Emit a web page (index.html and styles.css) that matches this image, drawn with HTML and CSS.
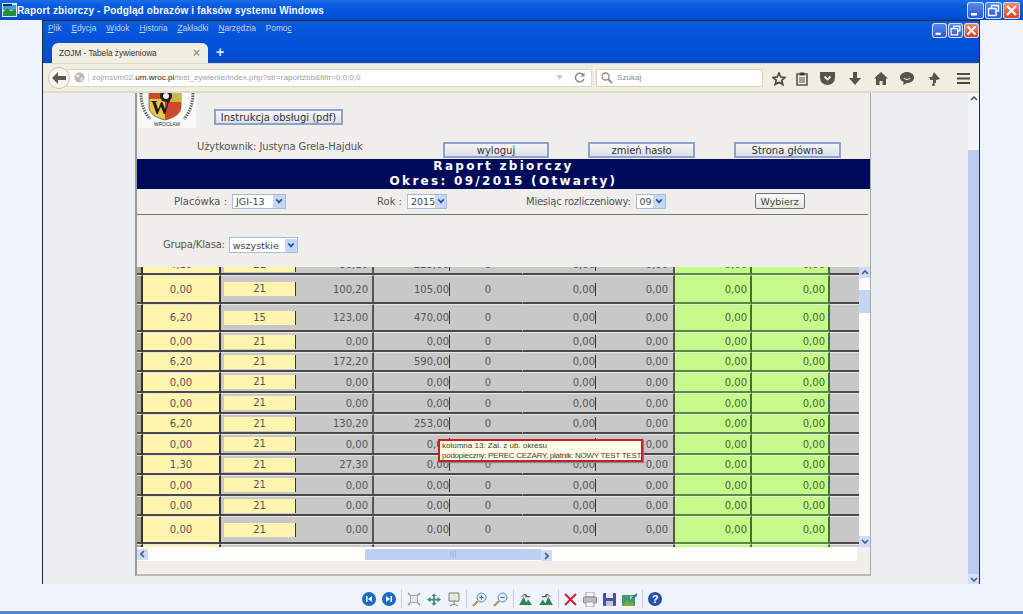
FILE: index.html
```html
<!DOCTYPE html>
<html lang="pl">
<head>
  <meta charset="UTF-8">
  <title>Raport zbiorczy - Podgląd obrazów i faksów systemu Windows</title>
  <link rel="stylesheet" href="styles.css">
</head>
<body>
  <!-- okno podgladu -->
  <div class="xp-title">
    <svg class="app-ico" width="15" height="14" viewBox="0 0 15 14"><rect width="15" height="14" fill="#d8e8f0"/><rect x="1" y="2" width="13" height="5" fill="#3aa0d8"/><path d="M1 9l4-4 4 3 5-2v7H1z" fill="#2c8a3c"/><rect x="1" y="1" width="9" height="2" fill="#10325a"/></svg>
    <span class="xp-title-txt">Raport zbiorczy - Podgląd obrazów i faksów systemu Windows</span>
    <div class="win-btns">
      <span class="wb"><svg width="17" height="17" viewBox="0 0 17 17"><rect x="4" y="11" width="6" height="2.5" fill="#fff"/></svg></span>
      <span class="wb"><svg width="17" height="17" viewBox="0 0 17 17"><path d="M6.5 6V3.5h7V9H11M3.5 6.5h7.5v7H3.5z" fill="none" stroke="#fff" stroke-width="1.4"/></svg></span>
      <span class="wb wb-x"><svg width="17" height="17" viewBox="0 0 17 17"><path d="M4 4l9 9M13 4l-9 9" stroke="#fff" stroke-width="2.2"/></svg></span>
    </div>
  </div>

  <div class="viewer">
    <div class="ff">
      <div class="ff-head">
        <div class="ff-menu">
          <span><u>P</u>lik</span><span><u>E</u>dycja</span><span><u>W</u>idok</span><span><u>H</u>istoria</span><span><u>Z</u>akładki</span><span><u>N</u>arzędzia</span><span>Pomo<u>c</u></span>
          <div class="win-btns small">
            <span class="wb"><svg width="15" height="15" viewBox="0 0 17 17"><rect x="4" y="11" width="6" height="2.5" fill="#fff"/></svg></span>
            <span class="wb"><svg width="15" height="15" viewBox="0 0 17 17"><path d="M6.5 6V3.5h7V9H11M3.5 6.5h7.5v7H3.5z" fill="none" stroke="#fff" stroke-width="1.4"/></svg></span>
            <span class="wb wb-x"><svg width="15" height="15" viewBox="0 0 17 17"><path d="M4 4l9 9M13 4l-9 9" stroke="#fff" stroke-width="2.2"/></svg></span>
          </div>
        </div>
        <div class="ff-tabs">
          <div class="tab"><span>ZOJM - Tabela żywieniowa</span><b>×</b></div>
          <span class="tab-plus">+</span>
        </div>
      </div>

      <div class="ff-bar">
        <span class="back"><svg width="14" height="12" viewBox="0 0 14 12"><path d="M6 0L0 6l6 6V8h8V4H6z" fill="#5a5a52"/></svg></span>
        <div class="url">
          <svg class="globe" width="11" height="11" viewBox="0 0 12 12"><circle cx="6" cy="6" r="5.5" fill="#b8b8b8"/><path d="M2 3h4v3H3zM7 6h3l-1 4H7z" fill="#e4e4e4"/></svg>
          <span class="url-txt">zojmsvm02.<b>um.wroc.pl</b>/test_zywienie/index.php?str=raportzbb&amp;filtr=0;0;0;0</span>
          <svg class="url-drop" width="7" height="5" viewBox="0 0 9 6"><path d="M0 0h9L4.5 6z" fill="#c4c4bc"/></svg>
          <svg class="url-reload" width="11" height="11" viewBox="0 0 11 11"><path d="M9.5 3.5A4.3 4.3 0 1 0 9.8 7" fill="none" stroke="#8a8a84" stroke-width="1.5"/><path d="M10.5 0.5v4h-4z" fill="#8a8a84"/></svg>
        </div>
        <div class="search">
          <svg width="12" height="12" viewBox="0 0 12 12"><circle cx="4.5" cy="4.5" r="3.5" fill="none" stroke="#8a8a8a" stroke-width="1.3"/><path d="M7 7l4 4" stroke="#8a8a8a" stroke-width="1.8"/></svg>
          <span>Szukaj</span>
        </div>
        <div class="ff-ico">
          <svg class="i-star" width="14" height="14" viewBox="0 0 14 14"><path d="M7 1l1.8 4 4.2.4-3.200 2.800 1 4.300L7 10.200 3.200 12.500l1-4.300L1 5.400 5.200 5z" fill="none" stroke="#4a4a44" stroke-width="1.700"/></svg>
          <svg class="i-list" width="12" height="14" viewBox="0 0 12 14"><path d="M1 2h10v11H1z" fill="none" stroke="#55554e" stroke-width="1.600"/><path d="M4 1h4v2H4zM3 6h6M3 8h6M3 10h6" stroke="#55554e" stroke-width="1.200"/></svg>
          <svg class="i-pocket" width="15" height="13" viewBox="0 0 15 13"><path d="M0 0h15v6a7.500 7 0 0 1-15 0z" fill="#55554e"/><path d="M4.500 4.500l3 3 3-3" fill="none" stroke="#f0eee0" stroke-width="1.800"/></svg>
          <svg class="i-down" width="12" height="13" viewBox="0 0 12 13"><path d="M4 0h4v6h4l-6 7-6-7h4z" fill="#55554e"/></svg>
          <svg class="i-home" width="14" height="13" viewBox="0 0 14 13"><path d="M7 0l7 6.500h-2V13H8.500V9h-3v4H2V6.500H0z" fill="#55554e"/></svg>
          <svg class="i-chat" width="14" height="13" viewBox="0 0 14 13"><path d="M7 0c4 0 7 2.300 7 5.500S11 11 7 11L3 13l.7-3C1.500 9 0 7.500 0 5.500 0 2.300 3 0 7 0z" fill="#55554e"/><path d="M4 6c1.500 2 4.500 2 6 0" fill="none" stroke="#f0eee0" stroke-width="1.200"/></svg>
          <svg class="i-puzzle" width="12" height="14" viewBox="0 0 12 14"><path d="M6 0l6 7-4 1v3H5V8H2V6H0l2-1h2z" fill="#55554e"/><circle cx="5.500" cy="12.500" r="1.500" fill="#55554e"/></svg>
          <svg class="i-menu" width="13" height="11" viewBox="0 0 13 11"><path d="M0 1h13M0 5.500h13M0 10h13" stroke="#4a4a44" stroke-width="2"/></svg>
        </div>
      </div>

      <div class="ff-content">
        <div class="gutter">
          <div class="page">
            <div class="top-row">
              <svg class="logo" width="58" height="35" viewBox="0 0 58 35">
                <rect width="58" height="35" fill="#f8f8f6"/>
                <path d="M11 0h32v14c0 7-8 11-16 13-8-2-16-6-16-13z" fill="#e8c64a" stroke="#333" stroke-width=".6"/>
                <path d="M27 9h16v5c0 7-8 11-16 13z" fill="#d0482c"/>
                <path d="M27 0h16v9H27z" fill="#c8b84a"/>
                <path d="M11 0h13v6H11z" fill="#cf4a2c"/>
                <circle cx="28" cy="3" r="6" fill="#222"/><circle cx="28" cy="3" r="3" fill="#eee"/>
                <text x="13" y="21" class="logo-w">W</text>
                <text x="29" y="33" class="logo-txt" text-anchor="middle">WROCŁAW</text>
                <path d="M3 0c0 10 3 19 9 26M55 0c0 10-3 19-9 26" fill="none" stroke="#666" stroke-width="3" stroke-dasharray="1.500 1"/>
              </svg>
              <button class="btn btn-pdf">Instrukcja obsługi (pdf)</button>
            </div>
            <div class="user-row">
              <span class="user">Użytkownik: Justyna Grela-Hajduk</span>
              <button class="btn btn-a">wyloguj</button>
              <button class="btn btn-b">zmień hasło</button>
              <button class="btn btn-b">Strona główna</button>
            </div>
            <div class="band">Raport zbiorczy<br>Okres: 09/2015 (Otwarty)</div>
            <div class="filters">
              <label class="f1">Placówka :</label><span class="sel sel1">JGI-13<i></i></span>
              <label class="f2">Rok :</label><span class="sel sel2">2015<i></i></span>
              <label class="f3">Miesiąc rozliczeniowy:</label><span class="sel sel3">09<i></i></span>
              <button class="btn-wyb">Wybierz</button>
            </div>
            <div class="group">
              <label>Grupa/Klasa:</label><span class="sel sel4">wszystkie<i></i></span>
            </div>

            <div class="tbl-box">
              <div class="tbl-main">
                <div class="tbl-view">
                  <table class="tbl">
                    <colgroup><col class="c0"><col class="c1"><col class="c2"><col class="c3"><col class="c4"><col class="c5"><col class="c6"><col class="c7"><col class="c8"><col class="c9"><col class="c10"></colgroup>
                    <tr class="h20"><td class="cut"></td><td class="z">4,10</td><td class="n"><span>21</span></td><td class="v">86,10</td><td class="a bar">225,00</td><td class="m">0</td><td class="a bar l">0,00</td><td class="v">0,00</td><td class="g">0,00</td><td class="g">0,00</td><td class="x"></td></tr>
                    <tr class="h29"><td class="cut"></td><td class="z">0,00</td><td class="n"><span>21</span></td><td class="v">100,20</td><td class="a bar">105,00</td><td class="m">0</td><td class="a bar l">0,00</td><td class="v">0,00</td><td class="g">0,00</td><td class="g">0,00</td><td class="x"></td></tr>
                    <tr class="h28"><td class="cut"></td><td class="z">6,20</td><td class="n"><span>15</span></td><td class="v">123,00</td><td class="a bar">470,00</td><td class="m">0</td><td class="a bar l">0,00</td><td class="v">0,00</td><td class="g">0,00</td><td class="g">0,00</td><td class="x"></td></tr>
                    <tr class="h20"><td class="cut"></td><td class="z">0,00</td><td class="n"><span>21</span></td><td class="v">0,00</td><td class="a bar">0,00</td><td class="m">0</td><td class="a bar l">0,00</td><td class="v">0,00</td><td class="g">0,00</td><td class="g">0,00</td><td class="x"></td></tr>
                    <tr class="h20"><td class="cut"></td><td class="z">6,20</td><td class="n"><span>21</span></td><td class="v">172,20</td><td class="a bar">590,00</td><td class="m">0</td><td class="a bar l">0,00</td><td class="v">0,00</td><td class="g">0,00</td><td class="g">0,00</td><td class="x"></td></tr>
                    <tr class="h21"><td class="cut"></td><td class="z">0,00</td><td class="n"><span>21</span></td><td class="v">0,00</td><td class="a bar">0,00</td><td class="m">0</td><td class="a bar l">0,00</td><td class="v">0,00</td><td class="g">0,00</td><td class="g">0,00</td><td class="x"></td></tr>
                    <tr class="h21"><td class="cut"></td><td class="z">0,00</td><td class="n"><span>21</span></td><td class="v">0,00</td><td class="a bar">0,00</td><td class="m">0</td><td class="a bar l">0,00</td><td class="v">0,00</td><td class="g">0,00</td><td class="g">0,00</td><td class="x"></td></tr>
                    <tr class="h20"><td class="cut"></td><td class="z">6,20</td><td class="n"><span>21</span></td><td class="v">130,20</td><td class="a bar">253,00</td><td class="m">0</td><td class="a bar l">0,00</td><td class="v">0,00</td><td class="g">0,00</td><td class="g">0,00</td><td class="x"></td></tr>
                    <tr class="h21"><td class="cut"></td><td class="z">0,00</td><td class="n"><span>21</span></td><td class="v">0,00</td><td class="a bar">0,00</td><td class="m">0</td><td class="a bar l">0,00</td><td class="v">0,00</td><td class="g">0,00</td><td class="g">0,00</td><td class="x"></td></tr>
                    <tr class="h20"><td class="cut"></td><td class="z">1,30</td><td class="n"><span>21</span></td><td class="v">27,30</td><td class="a bar">0,00</td><td class="m">0</td><td class="a bar l">0,00</td><td class="v">0,00</td><td class="g">0,00</td><td class="g">0,00</td><td class="x"></td></tr>
                    <tr class="h21"><td class="cut"></td><td class="z">0,00</td><td class="n"><span>21</span></td><td class="v">0,00</td><td class="a bar">0,00</td><td class="m">0</td><td class="a bar l">0,00</td><td class="v">0,00</td><td class="g">0,00</td><td class="g">0,00</td><td class="x"></td></tr>
                    <tr class="h20"><td class="cut"></td><td class="z">0,00</td><td class="n"><span>21</span></td><td class="v">0,00</td><td class="a bar">0,00</td><td class="m">0</td><td class="a bar l">0,00</td><td class="v">0,00</td><td class="g">0,00</td><td class="g">0,00</td><td class="x"></td></tr>
                    <tr class="h28"><td class="cut"></td><td class="z">0,00</td><td class="n"><span>21</span></td><td class="v">0,00</td><td class="a bar">0,00</td><td class="m">0</td><td class="a bar l">0,00</td><td class="v">0,00</td><td class="g">0,00</td><td class="g">0,00</td><td class="x"></td></tr>
                    <tr class="h20"><td class="cut"></td><td class="z"></td><td class="n"></td><td class="v"></td><td class="a"></td><td class="m"></td><td class="a l"></td><td class="v"></td><td class="g"></td><td class="g"></td><td class="x"></td></tr>
                  </table>
                  <div class="tip">kolumna 13: Zal. z ub. okresu<br><span class="tip-l2">podopieczny: PEREC CEZARY, płatnik: NOWY TEST TEST</span></div>
                </div>
                <div class="sb-v">
                  <span class="sb-arrow"><svg width="8" height="5" viewBox="0 0 8 5"><path d="M1 4l3-3 3 3" fill="none" stroke="#3c5a9a" stroke-width="1.600"/></svg></span>
                  <span class="sb-thumb-v"></span>
                  <span class="sb-arrow sb-end"><svg width="8" height="5" viewBox="0 0 8 5"><path d="M1 1l3 3 3-3" fill="none" stroke="#3c5a9a" stroke-width="1.600"/></svg></span>
                </div>
              </div>
              <div class="sb-h">
                <span class="sb-arrow"><svg width="5" height="8" viewBox="0 0 5 8"><path d="M4 1L1 4l3 3" fill="none" stroke="#3c5a9a" stroke-width="1.600"/></svg></span>
                <span class="sb-thumb-h">|||</span>
                <span class="sb-arrow sb-end"><svg width="5" height="8" viewBox="0 0 5 8"><path d="M1 1l3 3-3 3" fill="none" stroke="#3c5a9a" stroke-width="1.600"/></svg></span>
              </div>
            </div>
          </div>
        </div>
        <div class="sb-page">
          <span class="sb-arrow"><svg width="8" height="5" viewBox="0 0 8 5"><path d="M1 4l3-3 3 3" fill="none" stroke="#3c5a9a" stroke-width="1.600"/></svg></span>
          <span class="sb-thumb-page"></span>
          <span class="sb-arrow"><svg width="8" height="5" viewBox="0 0 8 5"><path d="M1 1l3 3 3-3" fill="none" stroke="#3c5a9a" stroke-width="1.600"/></svg></span>
        </div>
      </div>
    </div>
  </div>

  <div class="pv-bar">
    <svg width="14" height="14" viewBox="0 0 14 14"><circle cx="7" cy="7" r="7" fill="#1c6cc0"/><path d="M4 4h1.500v6H4zM10 4v6L6 7z" fill="#fff"/></svg>
    <svg width="14" height="14" viewBox="0 0 14 14"><circle cx="7" cy="7" r="7" fill="#1c6cc0"/><path d="M8.500 4H10v6H8.500zM4 4v6l4-3z" fill="#fff"/></svg>
    <i class="sep"></i>
    <svg width="14" height="14" viewBox="0 0 14 14"><path d="M1 1l3 3M13 1l-3 3M1 13l3-3M13 13l-3-3" stroke="#8a8a8a" stroke-width="1.200"/><rect x="3.500" y="3.500" width="7" height="7" fill="#dfe6ec" stroke="#a8a8a8"/></svg>
    <svg width="14" height="13" viewBox="0 0 16 14"><path d="M8 0l3 3H9v3h3V4l4 3-4 3V8H9v3h2l-3 3-3-3h2V8H4v2L0 7l4-3v2h3V3H5z" fill="#3e8a7c"/></svg>
    <svg width="14" height="15" viewBox="0 0 14 15"><path d="M2 1h10v8H2z" fill="#e6e6da" stroke="#808078"/><path d="M7 9v3M3 14l4-2 4 2" stroke="#808078" fill="none"/></svg>
    <i class="sep"></i>
    <svg width="15" height="15" viewBox="0 0 15 15"><circle cx="9.500" cy="5.500" r="4.500" fill="#dcebf8" stroke="#6c8cb0"/><path d="M7.500 5.500h4M9.500 3.500v4" stroke="#3a6ea8"/><path d="M6 9l-5 5" stroke="#c08a50" stroke-width="2"/></svg>
    <svg width="15" height="15" viewBox="0 0 15 15"><circle cx="9.500" cy="5.500" r="4.500" fill="#dcebf8" stroke="#6c8cb0"/><path d="M7.500 5.500h4" stroke="#3a6ea8"/><path d="M6 9l-5 5" stroke="#c08a50" stroke-width="2"/></svg>
    <i class="sep"></i>
    <svg width="14" height="11" viewBox="0 0 15 12"><path d="M0 12L5 3l4 9zM6 12l4-6 4 6z" fill="#2a8a4a"/><path d="M3 3a4 4 0 0 1 5-2l-1 2h5" fill="none" stroke="#222" stroke-width="1"/></svg>
    <svg width="14" height="11" viewBox="0 0 15 12"><path d="M0 12l4-6 4 6zM6 12l4-9 5 9z" fill="#2a8a4a"/><path d="M12 3a4 4 0 0 0-5-2l1 2H3" fill="none" stroke="#222" stroke-width="1"/></svg>
    <i class="sep"></i>
    <svg width="13" height="13" viewBox="0 0 13 13"><path d="M1 1l11 11M12 1L1 12" stroke="#cc2030" stroke-width="2"/></svg>
    <svg width="14" height="15" viewBox="0 0 14 15"><rect x="3" y="0" width="8" height="5" fill="#f4f4f4" stroke="#a0a0a0"/><rect x="0.500" y="5" width="13" height="6" rx="1" fill="#b8bcc4" stroke="#8a8a90"/><rect x="3" y="10" width="8" height="5" fill="#f8f8f8" stroke="#a0a0a0"/></svg>
    <svg width="13" height="13" viewBox="0 0 13 13"><rect width="13" height="13" rx="1" fill="#4a50a0"/><rect x="3" y="0" width="7" height="5" fill="#e8e8f4"/><rect x="3" y="8" width="7" height="5" fill="#c0c4e0"/></svg>
    <svg width="15" height="13" viewBox="0 0 15 13"><rect y="2" width="13" height="11" fill="#3a9a7a"/><path d="M0 13l5-6 3 3 2-2 3 5z" fill="#7aa83a"/><rect x="8" y="3" width="3" height="3" fill="#e8d44a"/><path d="M9 5l6-5v3l-4 3z" fill="#3a6ec0"/></svg>
    <i class="sep"></i>
    <svg width="14" height="14" viewBox="0 0 14 14"><circle cx="7" cy="7" r="7" fill="#2a4fa8"/><text x="7" y="11" class="help-q" text-anchor="middle">?</text></svg>
  </div>
</body>
</html>
```

FILE: styles.css
```css
html, body { margin:0; height:100%; }
body { width:1023px; height:614px; overflow:hidden; background:#eef3fc; font-family:"DejaVu Sans", sans-serif; display:flex; flex-direction:column; }

.xp-title { height:20px; flex:none; display:flex; align-items:center; padding-left:2px; background:linear-gradient(#1a6ee8, #0a5ade 30%, #0053d8 75%, #0049c0); }
.app-ico { flex:none; }
.xp-title-txt { margin-left:0; color:#f4f8ff; font:bold 10px "Liberation Sans", sans-serif; letter-spacing:0.14px; white-space:nowrap; }
.win-btns { margin-left:auto; display:flex; gap:1px; padding-right:3px; }
.wb { width:17px; height:17px; border-radius:3px; background:linear-gradient(#5a8cf0, #2a58d0); box-shadow:0 0 0 1px #cfe0ff inset; display:block; }
.wb svg { display:block; }
.wb-x { background:linear-gradient(#f09070, #d8401c); }
.win-btns.small { padding-right:0; }
.win-btns.small .wb { width:15px; height:15px; }

.viewer { height:564px; flex:none; padding:0 43px 0 42px; }
.ff { height:100%; border:solid #1c2a44; border-width:1px 1px 2px 1px; display:flex; flex-direction:column; }

.ff-head { height:42px; flex:none; background:linear-gradient(#0a5ade, #0050d8 70%, #0a48c8); }
.ff-menu { height:13px; display:flex; align-items:center; padding-left:5px; gap:10px; font:8.3px "Liberation Sans", sans-serif; color:#c2d2ec; }
.ff-menu .win-btns { margin-left:auto; padding-top:5px; }
.ff-tabs { height:29px; display:flex; align-items:flex-end; padding-left:9px; }
.tab { width:156px; height:20px; box-sizing:border-box; display:flex; justify-content:space-between; align-items:center; padding:0 8px 0 7px; background:#f1eee2; border-radius:6px 6px 0 0; font:8.2px "Liberation Sans", sans-serif; color:#333; }
.tab b { color:#999; font-size:12px; }
.tab-plus { color:#dfe8f8; font:bold 14px "Liberation Sans", sans-serif; margin:0 0 3px 8px; }

.ff-bar { height:30px; flex:none; box-sizing:border-box; display:flex; align-items:center; padding-left:5px; background:#f0eee0; border-top:1px solid #dcdccc; border-bottom:2px solid #dfdcc8; position:relative; }
.back { width:20px; height:20px; border-radius:50%; background:#f7f6ee; border:1px solid #c8c6b4; display:flex; align-items:center; justify-content:center; flex:none; z-index:1; }
.url { width:525px; height:18px; margin-left:-3px; box-sizing:border-box; background:#fff; border:1px solid #d8d6c4; display:flex; align-items:center; padding-left:6px; font:8.1px "Liberation Sans", sans-serif; color:#a0a09a; white-space:nowrap; }
.url-txt { margin-left:3px; border-left:1px solid #ddd; padding-left:3px; width:464px; }
.url-txt b { font-weight:normal; color:#222; }
.url-drop { margin-left:0; }
.url-reload { margin-left:11px; }
.search { width:167px; height:18px; margin-left:4px; box-sizing:border-box; background:#fff; border:1px solid #d4d2c0; display:flex; align-items:center; gap:4px; padding-left:4px; font:8.1px "Liberation Sans", sans-serif; color:#888; }
.ff-ico { flex:1; position:relative; height:100%; }
.ff-ico svg { position:absolute; top:8px; }
.i-star { left:9px; } .i-list { left:33px; } .i-pocket { left:57px; } .i-down { left:86px; } .i-home { left:111px; } .i-chat { left:137px; } .i-puzzle { left:165px; } .i-menu { left:194px; top:9px !important; }

.ff-content { flex:1; display:flex; min-height:0; background:#eceef1; }
.gutter { flex:1; padding-left:92px; overflow:hidden; }
.page { width:736px; height:483px; box-sizing:border-box; background:#f0eeea; border-left:2px solid #9a9a98; border-right:1px solid #a8a8a6; border-bottom:2px solid #bcbab4; font-size:10px; color:#4a4a4a; }

.top-row { height:48px; display:flex; align-items:flex-start; }
.logo { margin-left:1px; flex:none; }
.logo-w { font:bold 19px "Liberation Serif", serif; fill:#1a1a1a; }
.logo-txt { font:5px "Liberation Sans", sans-serif; fill:#333; }
.btn { height:16px; padding:0; box-sizing:border-box; border:2px solid #8ca4cc; background:linear-gradient(#f6f6f8, #dde0e8); font:10px "DejaVu Sans", sans-serif; color:#333; }
.btn-pdf { width:129px; margin:16px 0 0 18px; }

.user-row { height:18px; display:flex; align-items:flex-start; }
.user { width:246px; padding-left:60px; box-sizing:border-box; margin-top:0; color:#555; letter-spacing:-0.1px; white-space:nowrap; flex:none; }
.btn-a, .btn-b { width:107px; margin-top:1px; }
.btn-a { margin-left:60px; width:106px; }
.btn-b { margin-left:39px; }

.band { height:30px; background:#000a5a; color:#fff; text-align:center; font:bold 12px/15px "DejaVu Sans", sans-serif; letter-spacing:2.3px; }

.filters { height:26px; margin-right:2px; padding-bottom:1px; display:flex; align-items:center; border-bottom:1px solid #77756e; box-sizing:border-box; }
.filters label, .group label { color:#555; white-space:nowrap; }
.f1 { margin-left:37px; } .f2 { margin-left:91px; } .f3 { margin-left:79px; letter-spacing:-0.25px; }
.sel { height:15px; box-sizing:border-box; margin-left:5px; border:1px solid #a6bcdc; background:#fff; display:flex; align-items:center; justify-content:space-between; padding-left:3px; font:9.5px "DejaVu Sans", sans-serif; color:#444; }
.sel i { width:12px; height:13px; background:#c6d6f4; position:relative; display:block; }
.sel i::after { content:""; position:absolute; left:3px; top:2px; width:4px; height:4px; border:solid #2d4d9a; border-width:0 2px 2px 0; transform:rotate(45deg) scale(.8); }
.sel1 { width:54px; } .sel2 { width:40px; } .sel3 { width:30px; } .sel4 { width:69px; height:16px; }
.btn-wyb { width:50px; height:16px; margin-left:89px; padding:0; border:1px solid #6a7080; border-radius:2px; background:linear-gradient(#fbfbf8, #e8e6dc); font:9.5px "DejaVu Sans", sans-serif; color:#444; }
.group { height:52px; box-sizing:border-box; display:flex; align-items:flex-start; padding:22px 0 0 26px; }
.group label { margin-top:2px; letter-spacing:-0.2px; }
.group .sel { margin-left:4px; }

.tbl-box { width:733px; }
.tbl-main { display:flex; height:280px; }
.tbl-view { width:722px; flex:none; height:280px; overflow:hidden; position:relative; }
.tbl { margin-top:-12px; width:722px; table-layout:fixed; border-collapse:separate; border-spacing:0; font:10px "DejaVu Sans", sans-serif; color:#555; }
.c0 { width:6px; } .c1 { width:78px; } .c2 { width:75px; } .c3 { width:78px; } .c4 { width:76px; } .c5 { width:72px; } .c6 { width:74px; } .c7 { width:79px; } .c8 { width:77px; } .c9 { width:78px; } .c10 { width:29px; }
.tbl td { padding:0; box-sizing:border-box; border-bottom:2px solid #4a4a4a; border-top:1px solid #e6e6e6; background:#c8c8c8; text-align:right; white-space:nowrap; overflow:hidden; }
.h20 td { height:20px; } .h21 td { height:21px; } .h28 td { height:28px; } .h29 td { height:29px; }
.tbl td.cut { background:#a8a690; border-right:2px solid #333; }
.tbl td.z { background:#fff5ae; text-align:center; border-right:2px solid #333; }
.tbl td.n { text-align:left; }
.tbl td.n span { display:block; width:71px; height:14px; margin-left:3px; line-height:14px; text-align:center; background:#fff5ae; border-right:1px solid #333; }
.tbl td.v { padding-right:4px; border-right:2px solid #555; }
.tbl td:nth-child(8) { padding-right:5px; }
.tbl td.a { padding-right:1px; }
.tbl td.bar { background:linear-gradient(#333, #333) right center / 1px 13px no-repeat #c8c8c8; }
.tbl td.m { text-align:center; padding-left:4px; }
.tbl td.l { border-left:1px solid transparent; }
.tbl td.g { background:#c6fb8c; color:#3c6a2e; padding-right:3px; border-right:2px solid #44703a; border-bottom-color:#5a8a4c; border-top-color:#e4ffd0; }
.tbl td.x { background:#c8c8c8; }
.tip { position:absolute; left:301px; top:172px; width:205px; height:23px; box-sizing:border-box; padding:0 0 0 2px; background:#ffffe6; border:2px solid #c4202c; box-shadow:1px 1px 1px #888; font:8px/10px "Liberation Sans", sans-serif; color:#3a3a3a; white-space:nowrap; }
.tip-l2 { letter-spacing:-0.26px; }

.sb-v { width:11px; background:#fdfdfa; display:flex; flex-direction:column; }
.sb-arrow { width:11px; height:11px; flex:none; background:#d0dcf6; display:flex; align-items:center; justify-content:center; }
.sb-thumb-v { height:23px; margin-top:12px; background:#c4d4f4; }
.sb-end { margin-top:auto; }
.sb-h { height:14px; width:720px; display:flex; align-items:center; background:#fdfdfa; }
.sb-thumb-h { width:176px; height:11px; margin-left:217px; background:#bcd0f4; color:#8ea4cc; font-size:7px; line-height:11px; text-align:center; }

.sb-page { width:11px; flex:none; display:flex; flex-direction:column; background:#bfd0f2; }
.sb-page .sb-arrow { background:#d4dff6; }
.sb-thumb-page { flex:1; margin-top:44px; }
.sb-page .sb-thumb-page { background:#bcccf0; }
.sb-page .sb-arrow:first-child { background:#f4f5f7; height:57px; align-items:flex-start; padding-top:3px; box-sizing:border-box; margin-bottom:-44px; }

.pv-bar { flex:1; display:flex; align-items:center; justify-content:center; gap:6px; padding:3px 0 0 0; border-bottom:3px solid #4f86c8; background:#eef3fc; }
.pv-bar svg { flex:none; }
.pv-bar .sep { width:1px; height:18px; margin:0 -1px; background:#c8ccd4; }
.help-q { font:bold 11px "Liberation Sans", sans-serif; fill:#fff; }
```
